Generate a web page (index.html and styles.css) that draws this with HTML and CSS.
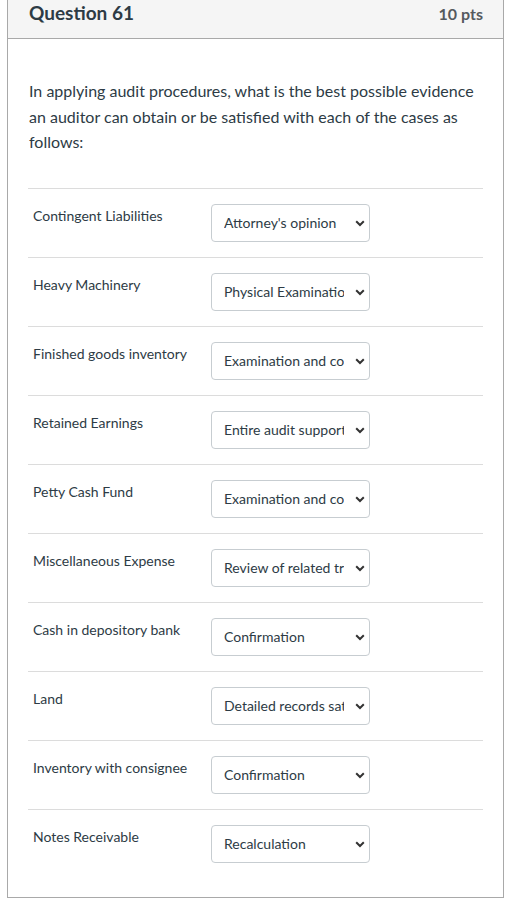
FILE: index.html
```html
<!DOCTYPE html>
<html>
<head>
<meta charset="utf-8">
<link rel="stylesheet" href="styles.css">
</head>
<body>
<div class="question">
  <div class="header">
    <span class="title">Question 61</span>
    <span class="pts">10 pts</span>
  </div>
  <div class="content">
    <p class="text">In applying audit procedures, what is the best possible evidence an auditor can obtain or be satisfied with each of the cases as follows:</p>
    <div class="rows">
      <div class="row"><div class="label">Contingent Liabilities</div><div class="select"><span class="val">Attorney's opinion</span><svg class="chev" width="10" height="7" viewBox="0 0 10 7"><path d="M1.2 1.3 L5 5 L8.8 1.3" fill="none" stroke="#333" stroke-width="2"/></svg></div></div>
      <div class="row"><div class="label">Heavy Machinery</div><div class="select"><span class="val">Physical Examination</span><svg class="chev" width="10" height="7" viewBox="0 0 10 7"><path d="M1.2 1.3 L5 5 L8.8 1.3" fill="none" stroke="#333" stroke-width="2"/></svg></div></div>
      <div class="row"><div class="label">Finished goods inventory</div><div class="select"><span class="val">Examination and count</span><svg class="chev" width="10" height="7" viewBox="0 0 10 7"><path d="M1.2 1.3 L5 5 L8.8 1.3" fill="none" stroke="#333" stroke-width="2"/></svg></div></div>
      <div class="row"><div class="label">Retained Earnings</div><div class="select"><span class="val">Entire audit support</span><svg class="chev" width="10" height="7" viewBox="0 0 10 7"><path d="M1.2 1.3 L5 5 L8.8 1.3" fill="none" stroke="#333" stroke-width="2"/></svg></div></div>
      <div class="row"><div class="label">Petty Cash Fund</div><div class="select"><span class="val">Examination and count</span><svg class="chev" width="10" height="7" viewBox="0 0 10 7"><path d="M1.2 1.3 L5 5 L8.8 1.3" fill="none" stroke="#333" stroke-width="2"/></svg></div></div>
      <div class="row"><div class="label">Miscellaneous Expense</div><div class="select"><span class="val">Review of related transactions</span><svg class="chev" width="10" height="7" viewBox="0 0 10 7"><path d="M1.2 1.3 L5 5 L8.8 1.3" fill="none" stroke="#333" stroke-width="2"/></svg></div></div>
      <div class="row"><div class="label">Cash in depository bank</div><div class="select"><span class="val">Confirmation</span><svg class="chev" width="10" height="7" viewBox="0 0 10 7"><path d="M1.2 1.3 L5 5 L8.8 1.3" fill="none" stroke="#333" stroke-width="2"/></svg></div></div>
      <div class="row"><div class="label">Land</div><div class="select"><span class="val">Detailed records satisfaction</span><svg class="chev" width="10" height="7" viewBox="0 0 10 7"><path d="M1.2 1.3 L5 5 L8.8 1.3" fill="none" stroke="#333" stroke-width="2"/></svg></div></div>
      <div class="row"><div class="label">Inventory with consignee</div><div class="select"><span class="val">Confirmation</span><svg class="chev" width="10" height="7" viewBox="0 0 10 7"><path d="M1.2 1.3 L5 5 L8.8 1.3" fill="none" stroke="#333" stroke-width="2"/></svg></div></div>
      <div class="row"><div class="label">Notes Receivable</div><div class="select"><span class="val">Recalculation</span><svg class="chev" width="10" height="7" viewBox="0 0 10 7"><path d="M1.2 1.3 L5 5 L8.8 1.3" fill="none" stroke="#333" stroke-width="2"/></svg></div></div>
    </div>
  </div>
</div>
</body>
</html>
```

FILE: styles.css
```css
html, body {
  margin: 0;
  padding: 0;
  background: #fff;
}
body {
  font-family: Lato, "Open Sans", sans-serif;
  color: #2d3b45;
}
.question {
  margin-left: 7px;
  width: 495px;
  border: 1px solid #a9a9a9;
  border-top: none;
}
.header {
  box-sizing: border-box;
  height: 39px;
  padding: 1px 20px 0 21px;
  background: #f5f5f5;
  border-bottom: 1px solid #a9a9a9;
  display: flex;
  justify-content: space-between;
  align-items: baseline;
}
.title {
  font-size: 19px;
  font-weight: 700;
  line-height: 23px;
  color: #2d3b45;
}
.pts {
  font-size: 16px;
  font-weight: 700;
  line-height: 23px;
  color: #555a5f;
}
.content {
  padding: 0 20px 19px 20px;
}
.text {
  margin: 0;
  padding: 39px 0 33px 0;
  font-size: 16px;
  line-height: 25.6px;
  padding-left: 1px;
}
.rows {
  display: flex;
  flex-direction: column;
}
.row {
  display: flex;
  align-items: flex-start;
  border-top: 1px solid #dcdcdc;
  padding: 15px 0 15px 5px;
}
.label {
  width: 178px;
  font-size: 14px;
  line-height: 20px;
  padding-top: 2px;
}
.select {
  box-sizing: border-box;
  width: 159px;
  height: 38px;
  border: 1px solid #c7cdd1;
  border-radius: 4px;
  display: flex;
  align-items: center;
  padding-left: 12px;
  position: relative;
  background: #fff;
}
.val {
  width: 120px;
  overflow: hidden;
  white-space: nowrap;
  font-size: 14px;
  line-height: 20px;
  color: #2d3b45;
}
.chev {
  position: absolute;
  right: 4px;
  top: 15px;
}
```
